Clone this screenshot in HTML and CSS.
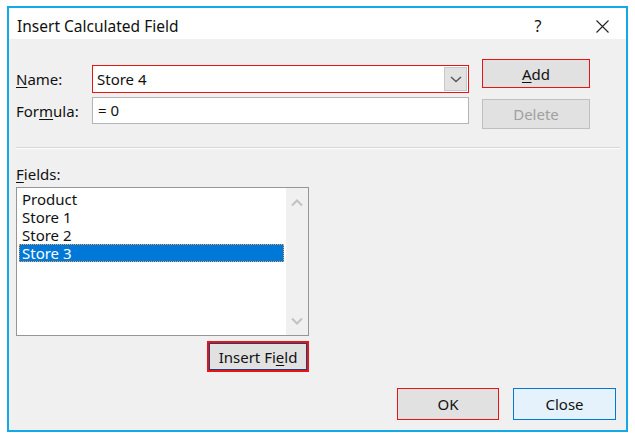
FILE: index.html
```html
<!DOCTYPE html>
<html lang="en">
<head>
    <meta charset="UTF-8">
    <title>Insert Calculated Field</title>
    <link rel="stylesheet" href="styles.css">
</head>
<body>
    <div class="dialog">
        <div class="titlebar">
            <span class="title">Insert Calculated Field</span>
            <span class="help">?</span>
            <span class="close-x">
                <svg width="13" height="13" viewBox="0 0 13 13">
                    <path d="M0.5 0.5 L12.5 12.5 M12.5 0.5 L0.5 12.5" stroke="#222" stroke-width="1.1" fill="none"/>
                </svg>
            </span>
        </div>

        <div class="content">
            <div class="top">
                <div class="form-grid">
                    <label class="lbl"><u>N</u>ame:</label>
                    <div class="combo">
                        <span class="combo-text">Store 4</span>
                        <span class="combo-btn">
                            <svg width="12" height="7" viewBox="0 0 12 7">
                                <path d="M1 1 L6 5.5 L11 1" stroke="#555" stroke-width="1.4" fill="none"/>
                            </svg>
                        </span>
                    </div>
                    <label class="lbl">For<u>m</u>ula:</label>
                    <div class="textbox">= 0</div>
                </div>
                <div class="side">
                    <button class="btn btn-red btn-add"><u>A</u>dd</button>
                    <button class="btn btn-disabled btn-delete">Delete</button>
                </div>
            </div>

            <div class="sep"></div>

            <div class="fields-label"><u>F</u>ields:</div>
            <div class="fields-col">
                <div class="listbox">
                    <div class="items">
                        <div class="item">Product</div>
                        <div class="item">Store 1</div>
                        <div class="item">Store 2</div>
                        <div class="item selected">Store 3</div>
                    </div>
                    <div class="vscroll">
                        <svg width="12" height="8" viewBox="0 0 12 8">
                            <path d="M1 6.5 L6 1.5 L11 6.5" stroke="#c2c2c2" stroke-width="2" fill="none"/>
                        </svg>
                        <svg width="12" height="8" viewBox="0 0 12 8">
                            <path d="M1 1.5 L6 6.5 L11 1.5" stroke="#c2c2c2" stroke-width="2" fill="none"/>
                        </svg>
                    </div>
                </div>
                <button class="btn btn-insert">Insert Fi<u>e</u>ld</button>
            </div>

            <div class="footer">
                <button class="btn btn-red btn-ok">OK</button>
                <button class="btn btn-blue btn-close">Close</button>
            </div>
        </div>
    </div>
</body>
</html>
```

FILE: styles.css
```css
body {
    margin: 0;
    background-color: #fff;
    font-family: "Noto Sans", "Open Sans", sans-serif;
    font-size: 15px;
    color: #111;
}
.dialog {
    margin: 6px 0 0 7px;
    width: 621px;
    height: 426px;
    box-sizing: border-box;
    border: 2px solid #12a9e9;
    background-color: #f0f0f0;
    display: flex;
    flex-direction: column;
}
.titlebar {
    height: 31px;
    background-color: #fff;
    display: flex;
    align-items: center;
    padding: 5px 6px 0 8px;
    box-sizing: border-box;
}
.title {
    flex: 1;
    font-size: 15.5px;
}
.help {
    width: 30px;
    text-align: center;
    margin-right: 26px;
    font-size: 16px;
}
.close-x {
    width: 46px;
    display: flex;
    justify-content: center;
    margin-right: -5px;
}
.content {
    padding: 0 10px 0 7px;
}
.top {
    display: flex;
    margin-top: 20px;
}
.form-grid {
    display: grid;
    grid-template-columns: 76px 377px;
    grid-template-rows: 28px 27px;
    row-gap: 4px;
    align-items: center;
    margin-top: 6px;
}
.lbl {
    line-height: 20px;
}
u {
    text-decoration-thickness: 1px;
    text-underline-offset: 2px;
}
.combo {
    height: 28px;
    box-sizing: border-box;
    border: 1px solid #e81414;
    background-color: #fff;
    display: flex;
    align-items: center;
    padding: 1px;
}
.combo-text {
    flex: 1;
    padding-left: 3px;
}
.combo-btn {
    width: 23px;
    height: 24px;
    box-sizing: border-box;
    background-color: #e2e2e2;
    border: 1px solid #c8c8c8;
    display: flex;
    align-items: center;
    justify-content: center;
}
.textbox {
    height: 27px;
    box-sizing: border-box;
    border: 1px solid #b4b4b4;
    background-color: #fff;
    padding-left: 5px;
    line-height: 24px;
}
.side {
    display: flex;
    flex-direction: column;
    margin-left: 13px;
}
.btn {
    font-family: inherit;
    font-size: 15px;
    color: #111;
    background-color: #e1e1e1;
    border: 1px solid #adadad;
    box-sizing: border-box;
    padding: 0;
    border-radius: 0;
}
.btn-red {
    border-color: #e81414;
}
.btn-blue {
    border-color: #0078d7;
    background-color: #e5f1fb;
}
.btn-disabled {
    color: #a0a0a0;
    border-color: #bfbfbf;
    background-color: #e1e1e1;
}
.btn-add {
    width: 108px;
    height: 29px;
}
.btn-delete {
    width: 108px;
    height: 30px;
    margin-top: 11px;
}
.sep {
    width: 604px;
    margin-top: 18px;
    border-top: 1px solid #d7d7d7;
    border-bottom: 1px solid #fcfcfc;
}
.fields-label {
    margin-top: 15px;
    line-height: 20px;
}
.fields-col {
    width: 293px;
    display: flex;
    flex-direction: column;
    align-items: flex-end;
    margin-top: 3px;
}
.listbox {
    width: 293px;
    height: 149px;
    box-sizing: border-box;
    border: 1px solid #969696;
    background-color: #fff;
    display: flex;
}
.items {
    width: 265px;
    padding: 2px 0 0 2px;
}
.item {
    height: 18px;
    line-height: 18px;
    padding-left: 3px;
    box-sizing: border-box;
}
.item.selected {
    background-color: #0078d7;
    color: #fff;
    border: 1px dotted #f0a050;
    padding-left: 2px;
    line-height: 16px;
}
.vscroll {
    width: 22px;
    margin-left: 2px;
    background-color: #f0f0f0;
    display: flex;
    flex-direction: column;
    justify-content: space-between;
    align-items: center;
    padding: 11px 0 10px;
    box-sizing: border-box;
}
.btn-insert {
    width: 102px;
    height: 31px;
    margin-top: 5px;
    border: 2px solid #e81414;
    box-shadow: inset 0 0 0 1px #1f3f7a;
}
.footer {
    display: flex;
    justify-content: flex-end;
    gap: 14px;
    margin-top: 16px;
}
.btn-ok {
    width: 102px;
    height: 32px;
}
.btn-close {
    width: 103px;
    height: 32px;
}
```
